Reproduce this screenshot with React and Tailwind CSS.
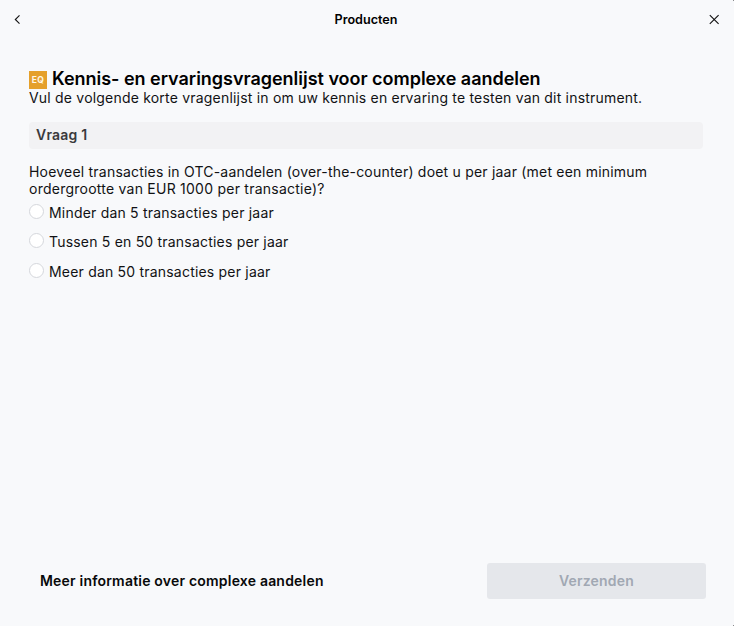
const options = [
  'Minder dan 5 transacties per jaar',
  'Tussen 5 en 50 transacties per jaar',
  'Meer dan 50 transacties per jaar',
];

export default function App() {
  return (
    <div className="relative flex h-[626px] w-[734px] flex-col overflow-hidden bg-[#f8f9fb] font-['Inter',sans-serif] text-[#111214]">
      <span className="absolute top-0 right-0 h-px w-px bg-[#8a8b8d]" />
      <span className="absolute right-0 bottom-0 h-px w-px bg-[#8a8b8d]" />
      <header className="grid h-[39px] grid-cols-[40px_1fr_42px] items-center">
        <button className="flex justify-start pl-[13px]" aria-label="Terug">
          <svg width="9" height="11" viewBox="0 0 9 11" fill="none" stroke="#111" strokeWidth="1.1"><path d="M6.5 1.3 2.3 5.5l4.2 4.2" /></svg>
        </button>
        <h1 className="pt-px text-center text-[12.6px] font-semibold text-black">Producten</h1>
        <button className="flex justify-end pr-[15px]" aria-label="Sluiten">
          <svg width="10" height="11" viewBox="0 0 10 11" fill="none" stroke="#111" strokeWidth="1.1"><path d="m.8 1.1 8.8 8.8M9.6 1.1.8 9.9" /></svg>
        </button>
      </header>
      <main className="flex-1 pt-[30px] pr-[31px] pl-[29px] text-[14px] leading-[17px] tracking-[0.2px]">
        <div className="flex h-5 items-center gap-[5px]">
          <span className="mt-0.5 flex h-[18px] w-[18px] items-center justify-center bg-[#e5a02b] text-[8.5px] font-bold tracking-[0.3px] text-[#fff6e4]">EQ</span>
          <h2 className="text-[18px] leading-5 font-semibold tracking-[-0.02px] whitespace-nowrap text-black">Kennis- en ervaringsvragenlijst voor complexe aandelen</h2>
        </div>
        <p className="whitespace-nowrap">Vul de volgende korte vragenlijst in om uw kennis en ervaring te testen van dit instrument.</p>
        <h3 className="mt-4 flex h-[27px] items-center rounded bg-[#f2f2f4] pb-0.5 pl-[7px] font-semibold text-[#3a3a3c]">Vraag 1</h3>
        <p className="mt-3.5 whitespace-nowrap">
          <span className="tracking-[0.205px]">Hoeveel transacties in OTC-aandelen (over-the-counter) doet u per jaar (met een minimum</span>
          <br />
          <span className="tracking-[0.24px]">ordergrootte van EUR 1000 per transactie)?</span>
        </p>
        <div className="mt-[7px] flex flex-col gap-[12.4px]">
          {options.map((o) => (
            <label key={o} className="flex h-[17px] gap-[5px]">
              <input type="radio" name="q" className="h-[15px] w-[15px] appearance-none rounded-full border border-[#d5d7dc] bg-white" />
              {o}
            </label>
          ))}
        </div>
      </main>
      <footer className="mb-[27px] flex h-9 items-center justify-between pr-7 pl-10 text-[14px] font-semibold tracking-[0.2px]">
        <a className="pb-0.5 text-[#08090a]">Meer informatie over complexe aandelen</a>
        <button className="h-9 w-[219px] rounded-[3px] bg-[#e5e7eb] pb-0.5 text-[#a1a8b3]">Verzenden</button>
      </footer>
    </div>
  );
}
